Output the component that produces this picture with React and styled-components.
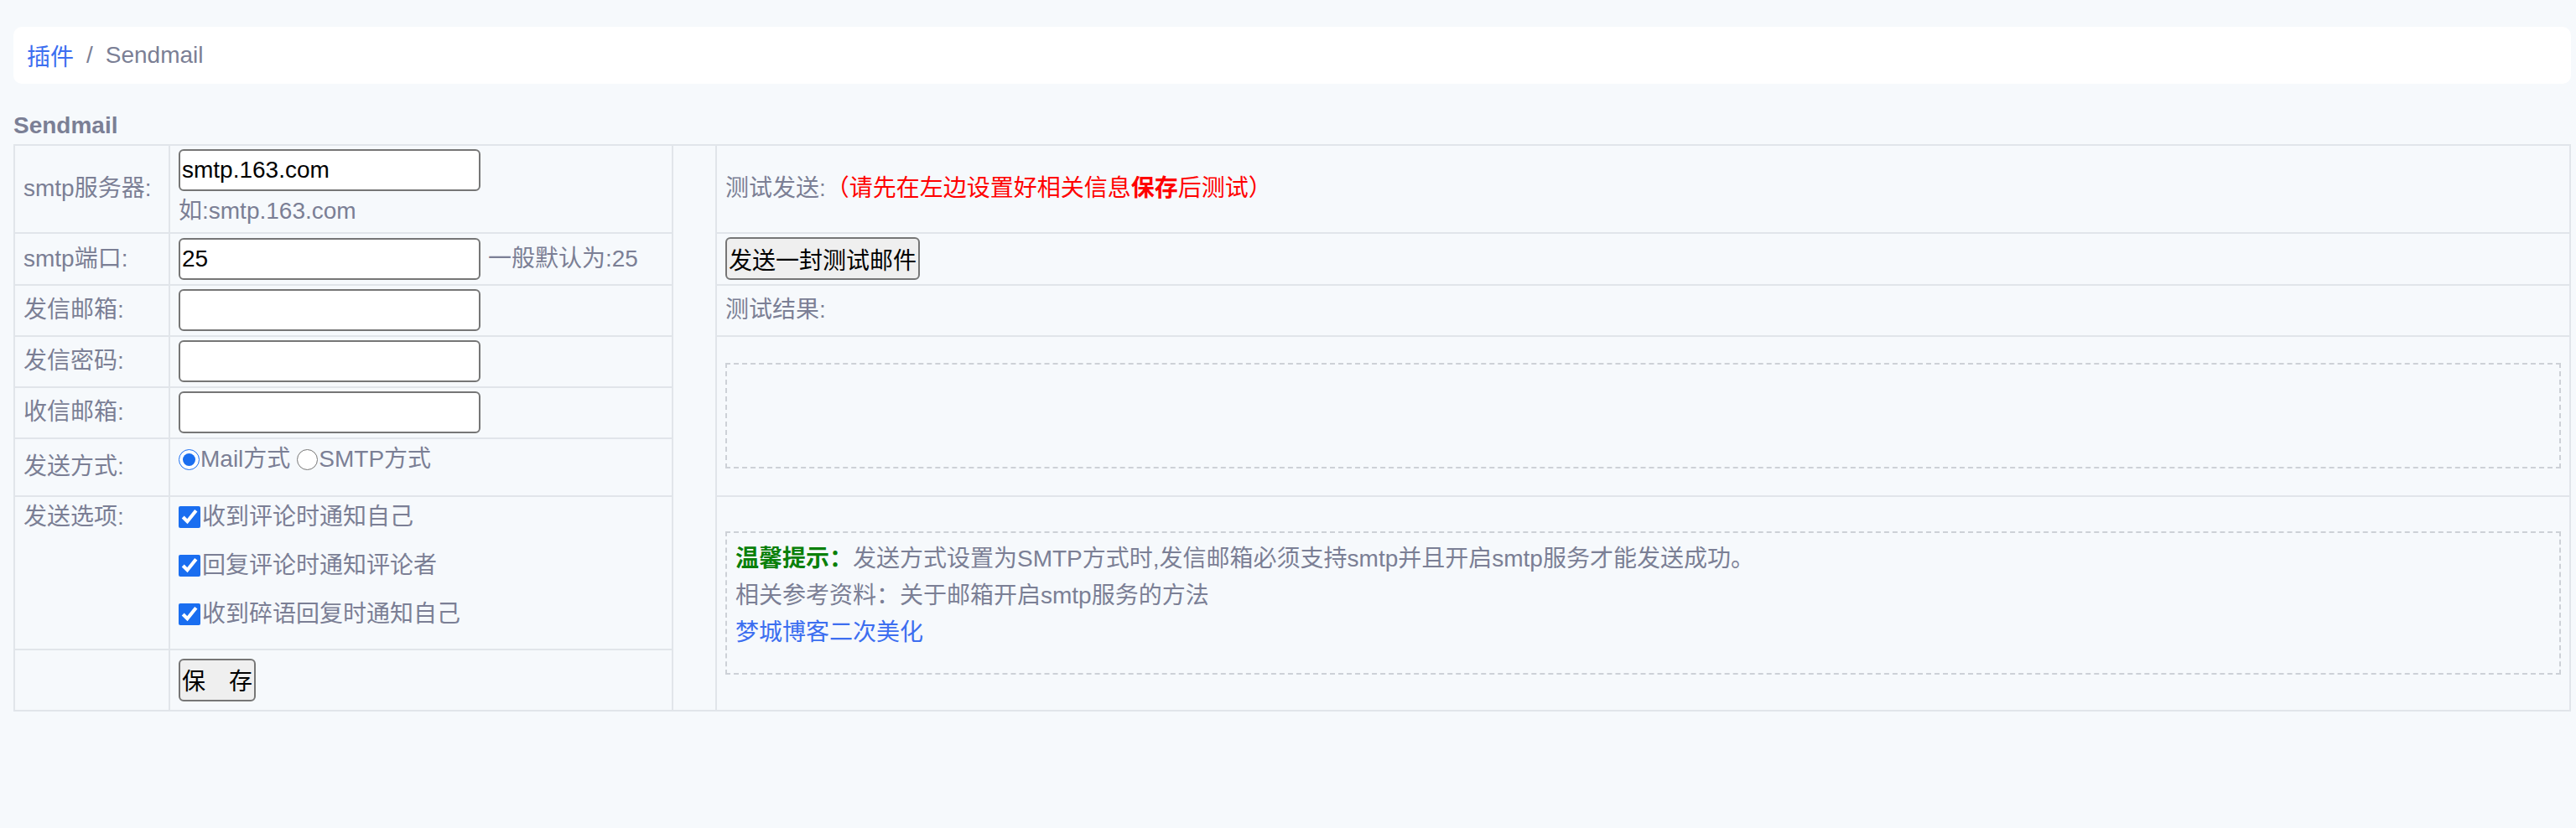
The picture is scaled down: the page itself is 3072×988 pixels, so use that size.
import React from 'react';
import styled, { createGlobalStyle } from 'styled-components';

const GlobalStyle = createGlobalStyle`
    body {
        margin: 0;
        background: #f6f9fc;
        font-family: "Liberation Sans", "Noto Sans CJK SC", sans-serif;
        font-size: 28px;
        color: #7b7f95;
    }
`

const Page = styled.div`
    box-sizing: border-box;
    min-height: 988px;
    padding: 32px 6px 0 16px;
`

const Breadcrumb = styled.nav`
    display: flex;
    align-items: center;
    height: 68px;
    padding: 0 16px;
    background: #fff;
    border-radius: 10px;
`

const Crumb = styled.span`
    color: ${props => props.$active ? '#3c6ef0' : '#7b7f95'};
`

const Sep = styled.span`
    margin: 0 15px;
    color: #7b7f95;
`

const Title = styled.h3`
    margin: 30px 0 2px;
    font-size: 28px;
    line-height: 40px;
    font-weight: 700;
    color: #7b7f95;
`

const Table = styled.table`
    width: 100%;
    border-collapse: collapse;
    line-height: 40px;
`

const Cell = styled.td`
    border: 2px solid #e1e5ea;
    padding: 4px 10px 5px;
    vertical-align: ${props => props.$top ? 'top' : 'middle'};
    white-space: nowrap;
`

const Field = styled.div`
    display: flex;
    align-items: center;
    gap: 9px;
`

const Input = styled.input`
    box-sizing: border-box;
    width: 360px;
    height: 50px;
    padding: 0 2px;
    border: 2px solid #767676;
    border-radius: 6px;
    background: #fff;
    font-family: "Liberation Sans", "Noto Sans CJK SC", sans-serif;
    font-size: 28px;
    color: #000;
    outline: none;
`

const Hint = styled.div`
    margin-top: 4px;
`

const Button = styled.button`
    height: 51px;
    padding: 0 2px;
    border: 2px solid #767676;
    border-radius: 6px;
    background: #efefef;
    font-family: "Liberation Sans", "Noto Sans CJK SC", sans-serif;
    font-size: 28px;
    color: #000;
    white-space: pre;
`

const Choice = styled.label`
    display: inline-flex;
    align-items: center;
    margin-right: 8px;
`

const Radio = styled.input.attrs({ type: 'radio' })`
    width: 25px;
    height: 25px;
    margin: 0 1px 0 0;
    accent-color: #1a6ef0;
`

const Check = styled.input.attrs({ type: 'checkbox' })`
    width: 26px;
    height: 26px;
    margin: 0 2px 0 0;
    accent-color: #1a6ef0;
`

const RadioLine = styled.div`
    margin-bottom: 14px;
`

const CheckItem = styled.label`
    display: flex;
    align-items: center;
    margin-bottom: 18px;

    &:last-child {
        margin-bottom: 16px;
    }
`

const Warn = styled.span`
    color: #ff0000;
`

const Dashed = styled.div`
    box-sizing: border-box;
    border: 2px dashed #cdd1d7;
    min-height: ${props => props.$h}px;
    padding: ${props => props.$pad || '0'};
`

const TipLine = styled.div`
    line-height: 44px;
`

const Strong = styled.strong`
    color: #0a800a;
`

const Link = styled.a`
    color: #3c6ef0;
    text-decoration: none;
`

export default function App() {
    return (
        <Page>
            <GlobalStyle />
            <Breadcrumb>
                <Crumb $active>插件</Crumb>
                <Sep>/</Sep>
                <Crumb>Sendmail</Crumb>
            </Breadcrumb>
            <Title>Sendmail</Title>
            <Table>
                <colgroup>
                    <col style={{ width: 185 }} />
                    <col style={{ width: 600 }} />
                    <col style={{ width: 52 }} />
                    <col />
                </colgroup>
                <tbody>
                    <tr>
                        <Cell>smtp服务器:</Cell>
                        <Cell>
                            <Input defaultValue="smtp.163.com" />
                            <Hint>如:smtp.163.com</Hint>
                        </Cell>
                        <Cell rowSpan={8} />
                        <Cell>测试发送:<Warn>（请先在左边设置好相关信息<b>保存</b>后测试）</Warn></Cell>
                    </tr>
                    <tr>
                        <Cell>smtp端口:</Cell>
                        <Cell>
                            <Field>
                                <Input defaultValue="25" />
                                <span>一般默认为:25</span>
                            </Field>
                        </Cell>
                        <Cell><Button>发送一封测试邮件</Button></Cell>
                    </tr>
                    <tr>
                        <Cell>发信邮箱:</Cell>
                        <Cell><Field><Input /></Field></Cell>
                        <Cell>测试结果:</Cell>
                    </tr>
                    <tr>
                        <Cell>发信密码:</Cell>
                        <Cell><Field><Input type="password" /></Field></Cell>
                        <Cell rowSpan={3}>
                            <Dashed $h={126} />
                        </Cell>
                    </tr>
                    <tr>
                        <Cell>收信邮箱:</Cell>
                        <Cell><Field><Input /></Field></Cell>
                    </tr>
                    <tr>
                        <Cell>发送方式:</Cell>
                        <Cell $top>
                            <RadioLine>
                                <Choice><Radio name="mode" defaultChecked />Mail方式</Choice>
                                <Choice><Radio name="mode" />SMTP方式</Choice>
                            </RadioLine>
                        </Cell>
                    </tr>
                    <tr>
                        <Cell $top>发送选项:</Cell>
                        <Cell $top>
                            <CheckItem><Check defaultChecked />收到评论时通知自己</CheckItem>
                            <CheckItem><Check defaultChecked />回复评论时通知评论者</CheckItem>
                            <CheckItem><Check defaultChecked />收到碎语回复时通知自己</CheckItem>
                        </Cell>
                        <Cell rowSpan={2}>
                            <Dashed $h={171} $pad="9px 10px 24px">
                                <TipLine><Strong>温馨提示：</Strong>发送方式设置为SMTP方式时,发信邮箱必须支持smtp并且开启smtp服务才能发送成功。</TipLine>
                                <TipLine>相关参考资料：关于邮箱开启smtp服务的方法</TipLine>
                                <TipLine><Link href="#">梦城博客二次美化</Link></TipLine>
                            </Dashed>
                        </Cell>
                    </tr>
                    <tr>
                        <Cell />
                        <Cell style={{ paddingTop: 10, paddingBottom: 10 }}>
                            <Button>保　存</Button>
                        </Cell>
                    </tr>
                </tbody>
            </Table>
        </Page>
    )
}
